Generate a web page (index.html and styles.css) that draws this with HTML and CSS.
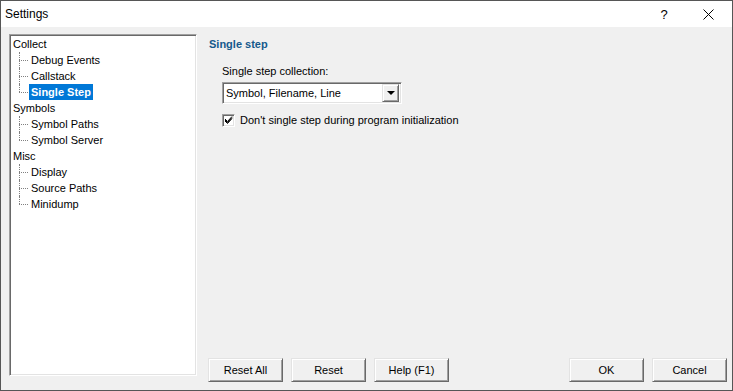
FILE: index.html
```html
<!DOCTYPE html>
<html lang="en">
<head>
    <meta charset="UTF-8">
    <title>Settings</title>
    <link rel="stylesheet" href="styles.css">
</head>
<body>
    <div class="window">
        <div class="titlebar">
            <span class="title">Settings</span>
            <span class="title-help">?</span>
            <span class="title-close">
                <svg width="11" height="11" viewBox="0 0 11 11"><path d="M0.5 0.5 L10.5 10.5 M10.5 0.5 L0.5 10.5" stroke="#000" stroke-width="1" fill="none"/></svg>
            </span>
        </div>
        <div class="main">
            <div class="tree">
                <ul class="tree-root">
                    <li>
                        <div class="node">Collect</div>
                        <ul class="children">
                            <li><div class="node">Debug Events</div></li>
                            <li><div class="node">Callstack</div></li>
                            <li><div class="node selected">Single Step</div></li>
                        </ul>
                    </li>
                    <li>
                        <div class="node">Symbols</div>
                        <ul class="children">
                            <li><div class="node">Symbol Paths</div></li>
                            <li><div class="node">Symbol Server</div></li>
                        </ul>
                    </li>
                    <li>
                        <div class="node">Misc</div>
                        <ul class="children">
                            <li><div class="node">Display</div></li>
                            <li><div class="node">Source Paths</div></li>
                            <li><div class="node">Minidump</div></li>
                        </ul>
                    </li>
                </ul>
            </div>
            <div class="panel">
                <div class="content">
                    <h2 class="heading">Single step</h2>
                    <div class="field-label">Single step collection:</div>
                    <div class="combo">
                        <span class="combo-text">Symbol, Filename, Line</span>
                        <span class="combo-btn"><span class="arrow"></span></span>
                    </div>
                    <div class="check-row">
                        <span class="checkbox">
                            <svg width="9" height="9" viewBox="0 0 9 9"><path d="M1 4 L3.5 6.5 L8 1.5 M1 5 L3.5 7.5 L8 2.5 M1 3 L3.5 5.5 L8 0.5" stroke="#000" stroke-width="1" fill="none"/></svg>
                        </span>
                        <span>Don't single step during program initialization</span>
                    </div>
                </div>
                <div class="buttons">
                    <div class="btn-group">
                        <button class="btn">Reset All</button>
                        <button class="btn">Reset</button>
                        <button class="btn">Help (F1)</button>
                    </div>
                    <div class="btn-group">
                        <button class="btn">OK</button>
                        <button class="btn">Cancel</button>
                    </div>
                </div>
            </div>
        </div>
    </div>
</body>
</html>
```

FILE: styles.css
```css
:root {
    --face: #f0f0f0;
    --shadow: #a0a0a0;
    --dark-shadow: #696969;
    --light: #e3e3e3;
    --select: #0078d7;
    --heading: #15598c;
}

* {
    margin: 0;
    padding: 0;
    box-sizing: border-box;
}

body {
    font-family: "Liberation Sans", Arial, sans-serif;
    font-size: 11px;
    color: #000;
    background: var(--face);
}

.window {
    width: 733px;
    height: 391px;
    border: 1px solid #565656;
    background: var(--face);
    display: flex;
    flex-direction: column;
}

.titlebar {
    height: 26px;
    background: #fff;
    display: flex;
    align-items: center;
    padding-left: 4px;
    font-size: 12px;
}

.title {
    flex: 1;
}

.title-help {
    font-size: 13px;
    width: 46px;
    text-align: center;
    padding-left: 6px;
    margin-right: 1px;
}

.title-close {
    width: 46px;
    display: flex;
    justify-content: center;
    align-items: center;
    margin-right: 1px;
}

.main {
    flex: 1;
    display: flex;
    padding: 7px 5px 8px 8px;
}

/* sunken 3d frame */
.tree,
.combo,
.checkbox {
    border: 1px solid;
    border-color: var(--shadow) #fff #fff var(--shadow);
    box-shadow: inset 1px 1px var(--dark-shadow), inset -1px -1px var(--light);
    background: #fff;
}

.tree {
    width: 188px;
    margin-bottom: 6px;
    padding: 1px 0 0 1px;
}

.tree ul {
    list-style: none;
}

.node {
    height: 16px;
    line-height: 16px;
    padding: 0 2px;
    display: inline-block;
    white-space: nowrap;
}

.children {
    padding-left: 18px;
}

.children li {
    position: relative;
}

.children li::before {
    content: "";
    position: absolute;
    left: -10px;
    top: 8px;
    width: 9px;
    border-top: 1px dotted #808080;
}

.children li::after {
    content: "";
    position: absolute;
    left: -10px;
    top: 0;
    height: 16px;
    border-left: 1px dotted #808080;
}

.children li:last-child::after {
    height: 8px;
}

.node.selected {
    background: var(--select);
    color: #fff;
    font-weight: bold;
}

.panel {
    flex: 1;
    display: flex;
    flex-direction: column;
    margin-left: 11px;
}

.content {
    flex: 1;
    padding: 2px 0 0 1px;
}

.heading {
    font-size: 11px;
    line-height: 16px;
    font-weight: bold;
    color: var(--heading);
    margin-bottom: 11px;
}

.field-label {
    line-height: 16px;
    margin-left: 13px;
    margin-bottom: 3px;
}

.combo {
    width: 180px;
    height: 22px;
    margin-left: 13px;
    display: flex;
    align-items: center;
    padding: 2px 2px 2px 3px;
    margin-bottom: 8px;
}

.combo-text {
    flex: 1;
}

.combo-btn {
    width: 17px;
    height: 18px;
    background: var(--face);
    border: 1px solid;
    border-color: var(--light) var(--dark-shadow) var(--dark-shadow) var(--light);
    box-shadow: inset 1px 1px #fff, inset -1px -1px var(--shadow);
    display: flex;
    justify-content: center;
    align-items: center;
}

.arrow {
    width: 0;
    height: 0;
    border-left: 4px solid transparent;
    border-right: 4px solid transparent;
    border-top: 4px solid #000;
}

.check-row {
    display: flex;
    align-items: center;
    height: 16px;
    margin-left: 13px;
    gap: 5px;
}

.checkbox {
    width: 13px;
    height: 13px;
    display: flex;
    justify-content: center;
    align-items: center;
}

.buttons {
    display: flex;
    justify-content: space-between;
}

.btn-group {
    display: flex;
    gap: 8px;
}

.btn {
    width: 75px;
    height: 24px;
    font-family: inherit;
    font-size: 11px;
    color: #000;
    background: var(--face);
    border: 1px solid;
    border-color: var(--light) var(--dark-shadow) var(--dark-shadow) var(--light);
    box-shadow: inset 1px 1px #fff, inset -1px -1px var(--shadow);
}
```
